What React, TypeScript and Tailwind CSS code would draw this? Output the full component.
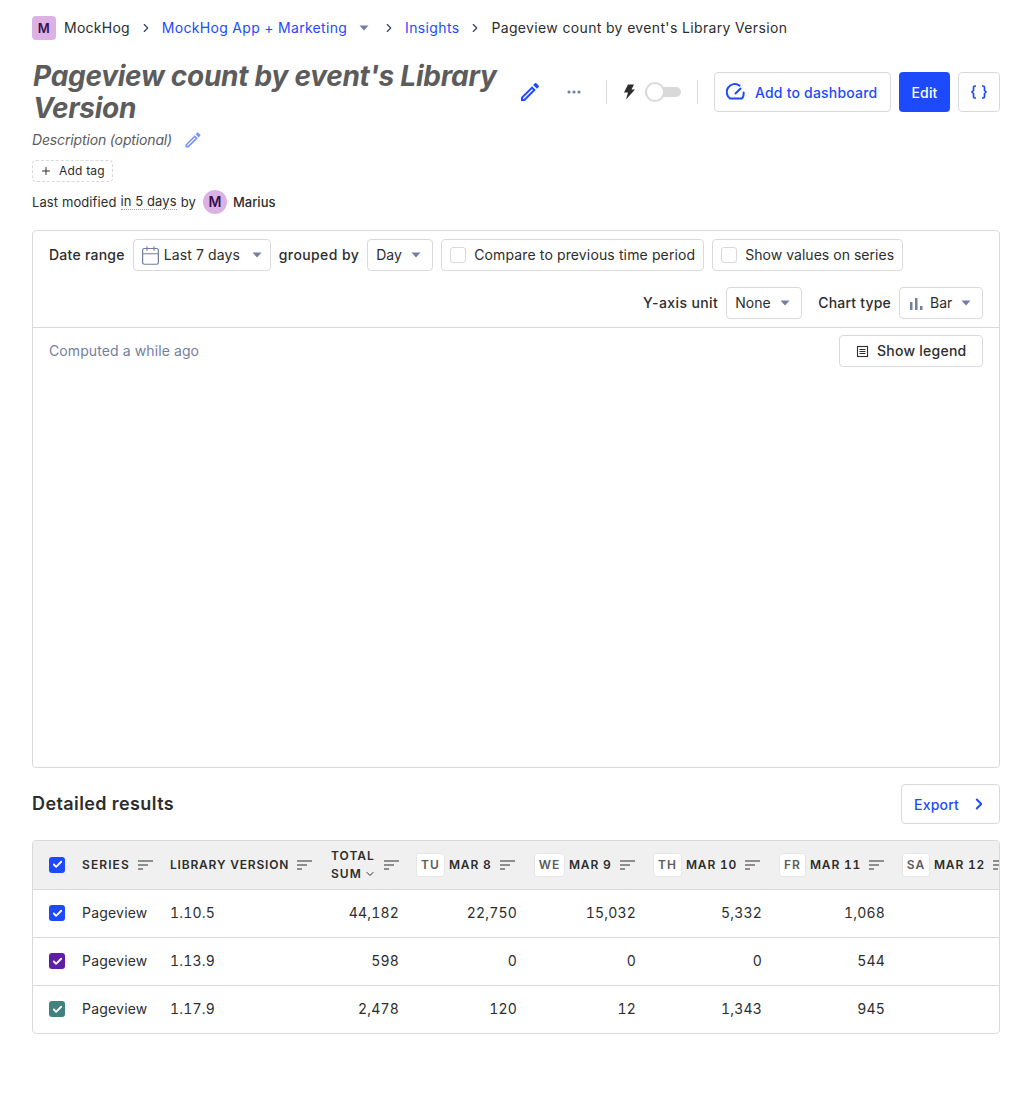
import React from 'react';
import { Calendar, Check, ChevronDown, ChevronRight, Plus } from 'lucide-react';

const Caret = () => (
  <svg width="10" height="6" viewBox="0 0 10 6" className="text-[#747ea1] shrink-0">
    <path d="M0.5 0.5h9L5 5.5z" fill="currentColor" />
  </svg>
);

const Pencil = ({ size, className }: { size: number; className: string }) => (
  <svg width={size} height={size} viewBox="0 0 24 24" fill="currentColor" className={className}>
    <path d="M14.06 9.02l.92.92L5.92 19H5v-.92l9.06-9.06M17.66 3c-.25 0-.51.1-.7.29l-1.83 1.83 3.75 3.75 1.83-1.83c.39-.39.39-1.02 0-1.41l-2.34-2.34c-.2-.2-.45-.29-.71-.29zm-3.6 3.19L3 17.25V21h3.75L17.81 9.94l-3.75-3.75z" />
  </svg>
);

const SortIcon = () => (
  <svg width="15" height="10" viewBox="0 0 15 10" className="text-[#2d2d2d] shrink-0">
    <path d="M0 1h15M0 5h10M0 9h5" stroke="currentColor" strokeWidth="1.2" />
  </svg>
);

const Select = ({ children, className }: { children: React.ReactNode; className: string }) => (
  <div className={`h-8 flex items-center border border-[#d9d9d9] rounded bg-white text-[#2d2d2d] ${className}`}>{children}</div>
);

const CheckOption = ({ label, className }: { label: string; className: string }) => (
  <div className={`h-8 flex items-center gap-2 px-2 border border-[#d9d9d9] rounded ${className}`}>
    <span className="w-4 h-4 border border-[#d9d9d9] rounded-[3px] bg-white" />
    {label}
  </div>
);

const SeriesBox = ({ color }: { color: string }) => (
  <span className={`w-4 h-4 rounded-[3px] flex items-center justify-center ${color}`}>
    <Check size={11} strokeWidth={4} className="text-white" />
  </span>
);

const days = [
  { day: 'TU', date: 'MAR 8', width: 'w-[118px]', badge: 'w-[29px]' },
  { day: 'WE', date: 'MAR 9', width: 'w-[119px]', badge: 'w-[31px]' },
  { day: 'TH', date: 'MAR 10', width: 'w-[126px]', badge: 'w-[29px]' },
  { day: 'FR', date: 'MAR 11', width: 'w-[123px]', badge: 'w-[27px]' },
  { day: 'SA', date: 'MAR 12', width: 'w-[123px]', badge: 'w-[28px]' },
];

const rows = [
  { color: 'bg-[#1d4aff]', version: '1.10.5', total: '44,182', values: ['22,750', '15,032', '5,332', '1,068', ''] },
  { color: 'bg-[#621da6]', version: '1.13.9', total: '598', values: ['0', '0', '0', '544', ''] },
  { color: 'bg-[#42827e]', version: '1.17.9', total: '2,478', values: ['120', '12', '1,343', '945', ''] },
];

export default function App() {
  return (
    <div className="w-[1032px] h-[1098px] bg-white px-8 pt-4 text-sm text-[#2d2d2d] font-['Inter',sans-serif] overflow-hidden">
      {/* Breadcrumbs */}
      <div className="h-6 flex items-center tracking-[0.35px]">
        <span className="w-6 h-6 rounded bg-[#dcb1e3] text-[#35104f] text-[13px] font-semibold flex items-center justify-center mr-2">M</span>
        <span className="tracking-[0.25px]">MockHog</span>
        <ChevronRight size={14} className="mx-[9px] text-[#35416b]" />
        <span className="text-[#1d4aff] tracking-[0.3px]">MockHog App + Marketing</span>
        <span className="ml-3 mr-1"><Caret /></span>
        <ChevronRight size={14} className="mx-[9px] text-[#35416b]" />
        <span className="text-[#1d4aff]">Insights</span>
        <ChevronRight size={14} className="mx-[9px] text-[#35416b]" />
        <span>Pageview count by event's Library Version</span>
      </div>

      {/* Title row */}
      <div className="mt-5 flex items-center h-16">
        <h1 className="w-[476px] pl-[1px] text-[28px] leading-8 font-bold italic text-[#5c5c5c] tracking-[-0.27px]">
          Pageview count by event's Library Version
        </h1>
        <Pencil size={24} className="ml-[10px] text-[#1d4aff]" />
        <svg width="14" height="4" viewBox="0 0 14 4" className="ml-[25px] text-[#747ea1]">
          <circle cx="2" cy="2" r="1.6" fill="currentColor" />
          <circle cx="7" cy="2" r="1.6" fill="currentColor" />
          <circle cx="12" cy="2" r="1.6" fill="currentColor" />
        </svg>
        <div className="ml-[25px] w-px h-6 bg-[#d9d9d9]" />
        <svg width="12" height="16" viewBox="0 0 12 16" className="ml-[16px] text-[#2d2d2d]">
          <path d="M5 0.5h6L8.5 5.5H12L3 15.5l2-7H1z" fill="currentColor" />
        </svg>
        <div className="ml-[10px] relative w-9 h-5 flex items-center">
          <div className="w-full h-2.5 rounded-full bg-[#d9d9d9]" />
          <div className="absolute left-0 top-0 w-5 h-5 rounded-full bg-white border-2 border-[#d9d9d9]" />
        </div>
        <div className="ml-4 w-px h-6 bg-[#d9d9d9]" />
        <div className="ml-4 h-10 w-[177px] flex items-center gap-[9px] pl-[11px] border border-[#d9d9d9] rounded text-[#1d4aff] font-medium tracking-[0.2px]">
          <svg width="20" height="20" viewBox="0 0 20 20" fill="none" stroke="currentColor" strokeWidth="2" strokeLinecap="round" strokeLinejoin="round">
            <path d="M13.5 3.6A8 8 0 0 0 4 16.5h12a8 8 0 0 0 1.6-6" />
            <path d="M9.500 11.500l5-5" />
          </svg>
          <span className="pt-[2px]">Add to dashboard</span>
        </div>
        <div className="ml-2 h-10 w-[51px] pt-[2px] flex items-center justify-center rounded bg-[#1d4aff] text-white font-medium tracking-[0.2px]">Edit</div>
        <div className="ml-2 h-10 w-[42px] flex items-center justify-center border border-[#d9d9d9] rounded text-[#1d4aff]">
          <svg width="18" height="16" viewBox="0 0 18 16" fill="none" stroke="currentColor" strokeWidth="1.7">
            <path d="M6 2H5A1.500 1.500 0 0 0 3.500 3.500v3L2 8l1.500 1.500v3A1.500 1.500 0 0 0 5 14h1" />
            <path d="M12 2h1a1.500 1.500 0 0 1 1.500 1.500v3L16 8l-1.500 1.500v3A1.500 1.500 0 0 1 13 14h-1" />
          </svg>
        </div>
      </div>

      <div className="mt-[6px] h-5 flex items-center italic text-[#5c5c5c] tracking-[-0.15px]">
        Description (optional)
        <Pencil size={20} className="ml-[11px] text-[#7d94ff]" />
      </div>

      <div className="mt-[10px] h-[22px] w-[81px] flex items-center gap-[6px] pl-[7px] border border-dashed border-[#d9d9d9] rounded text-xs tracking-[0.2px]">
        <Plus size={12} />
        <span className="ml-[1px]">Add tag</span>
      </div>

      <div className="mt-2 h-6 flex items-center text-[13px] tracking-[0.1px]">
        Last modified
        <span className="ml-1 border-b border-dotted border-[#9a9a9a] leading-[15px]">in 5 days</span>
        <span className="ml-1">by</span>
        <span className="ml-[7px] w-6 h-6 rounded-full bg-[#dcb1e3] text-[#35104f] text-sm font-semibold flex items-center justify-center">M</span>
        <span className="ml-[6px] font-medium tracking-normal">Marius</span>
      </div>

      {/* Insight card */}
      <div className="mt-4 h-[538px] border border-[#d9d9d9] rounded">
        <div className="h-[97px] px-4 pt-2 border-b border-[#d9d9d9]">
          <div className="flex items-center h-8">
            <span className="font-medium tracking-[0.25px]">Date range</span>
            <Select className="ml-2 w-[138px] pl-[6px] gap-[3px]">
              <Calendar size={21} strokeWidth={1.4} className="text-[#747ea1]" />
              <span className="tracking-[0.1px]">Last 7 days</span>
              <span className="ml-[9px]"><Caret /></span>
            </Select>
            <span className="ml-2 font-medium tracking-[0.4px]">grouped by</span>
            <Select className="ml-2 w-[66px] pl-2 gap-[9px]">
              <span>Day</span>
              <Caret />
            </Select>
            <div className="ml-2"><CheckOption label="Compare to previous time period" className="tracking-[0.13px]" /></div>
            <div className="ml-2"><CheckOption label="Show values on series" className="tracking-[0.03px]" /></div>
          </div>
          <div className="mt-4 flex items-center justify-end h-8">
            <span className="font-medium tracking-[0.4px]">Y-axis unit</span>
            <Select className="ml-2 w-[76px] pl-2 gap-[9px]">
              <span>None</span>
              <Caret />
            </Select>
            <span className="ml-4 font-medium tracking-[0.2px]">Chart type</span>
            <Select className="ml-2 w-[84px] pl-[10px] gap-[7px]">
              <svg width="13" height="13" viewBox="0 0 13 13" className="text-[#747ea1]">
                <path d="M0 5h2.500v8H0zM5 1h2.500v12H5zM10 9h2.500v4H10z" fill="currentColor" />
              </svg>
              <span>Bar</span>
              <span className="ml-[2px]"><Caret /></span>
            </Select>
          </div>
        </div>
        <div className="px-4 pt-[7px] flex items-start justify-between">
          <span className="mt-1.5 text-[#747ea1] tracking-[0.1px]">Computed a while ago</span>
          <div className="h-8 w-[144px] flex items-center gap-2 pl-4 border border-[#d9d9d9] rounded font-medium tracking-[0.25px]">
            <svg width="13" height="13" viewBox="0 0 13 13" fill="none" stroke="currentColor" strokeWidth="1.1">
              <rect x="1.500" y="1.500" width="10" height="10" />
              <path d="M3.500 4.500h6M3.500 6.500h6M3.500 8.500h6" />
            </svg>
            Show legend
          </div>
        </div>
      </div>

      {/* Detailed results */}
      <div className="mt-4 h-10 flex items-center justify-between">
        <h2 className="text-lg font-semibold tracking-[0.4px]">Detailed results</h2>
        <div className="h-10 w-[99px] flex items-center pl-3 border border-[#d9d9d9] rounded text-[#1d4aff] font-medium tracking-[0.2px]">
          <span className="pt-[2px]">Export</span>
          <ChevronRight size={18} strokeWidth={2.5} className="ml-[11px]" />
        </div>
      </div>

      <div className="mt-4 border border-[#d9d9d9] rounded overflow-hidden">
        <table className="table-fixed border-collapse w-[984px] tabular-nums">
          <thead>
            <tr className="h-12 bg-[#f0f0f0] border-b border-[#d9d9d9] text-xs font-semibold tracking-[0.8px]">
              <th className="w-[41px] pl-4 text-left align-middle"><SeriesBox color="bg-[#1d4aff]" /></th>
              <th className="w-[88px] pl-2 font-semibold text-left">
                <div className="flex items-center gap-2 tracking-[1.1px]">SERIES <SortIcon /></div>
              </th>
              <th className="w-[161px] pl-2 font-semibold text-left">
                <div className="flex items-center gap-2 whitespace-nowrap">LIBRARY VERSION <SortIcon /></div>
              </th>
              <th className="w-[85px] pl-2 pr-2 font-semibold text-left">
                <div className="flex items-center gap-2">
                  <div className="leading-[18px] tracking-[1px]">
                    TOTAL
                    <div className="flex items-center gap-[2px]">SUM <ChevronDown size={12} /></div>
                  </div>
                  <SortIcon />
                </div>
              </th>
              {days.map((d) => (
                <th key={d.day} className={`${d.width} pl-2 font-semibold text-left`}>
                  <div className="flex items-center gap-[4px] whitespace-nowrap">
                    <span className={`${d.badge} h-6 shrink-0 rounded-[3px] bg-white border border-[#e6e6e6] text-[#5c5c5c] tracking-[1px] flex items-center justify-center`}>{d.day}</span>
                    {d.date}
                    <span className="ml-[4px]"><SortIcon /></span>
                  </div>
                </th>
              ))}
            </tr>
          </thead>
          <tbody>
            {rows.map((row, i) => (
              <tr key={row.version} className={`h-12 tracking-[0.2px] ${i < rows.length - 1 ? 'border-b border-[#d9d9d9]' : ''}`}>
                <td className="pl-4"><SeriesBox color={row.color} /></td>
                <td className="pl-2">Pageview</td>
                <td className="pl-2">{row.version}</td>
                <td className="pr-[9px] text-right">{row.total}</td>
                {row.values.map((v, j) => (
                  <td key={j} className="pr-[9px] text-right">{v}</td>
                ))}
              </tr>
            ))}
          </tbody>
        </table>
      </div>
    </div>
  );
}
